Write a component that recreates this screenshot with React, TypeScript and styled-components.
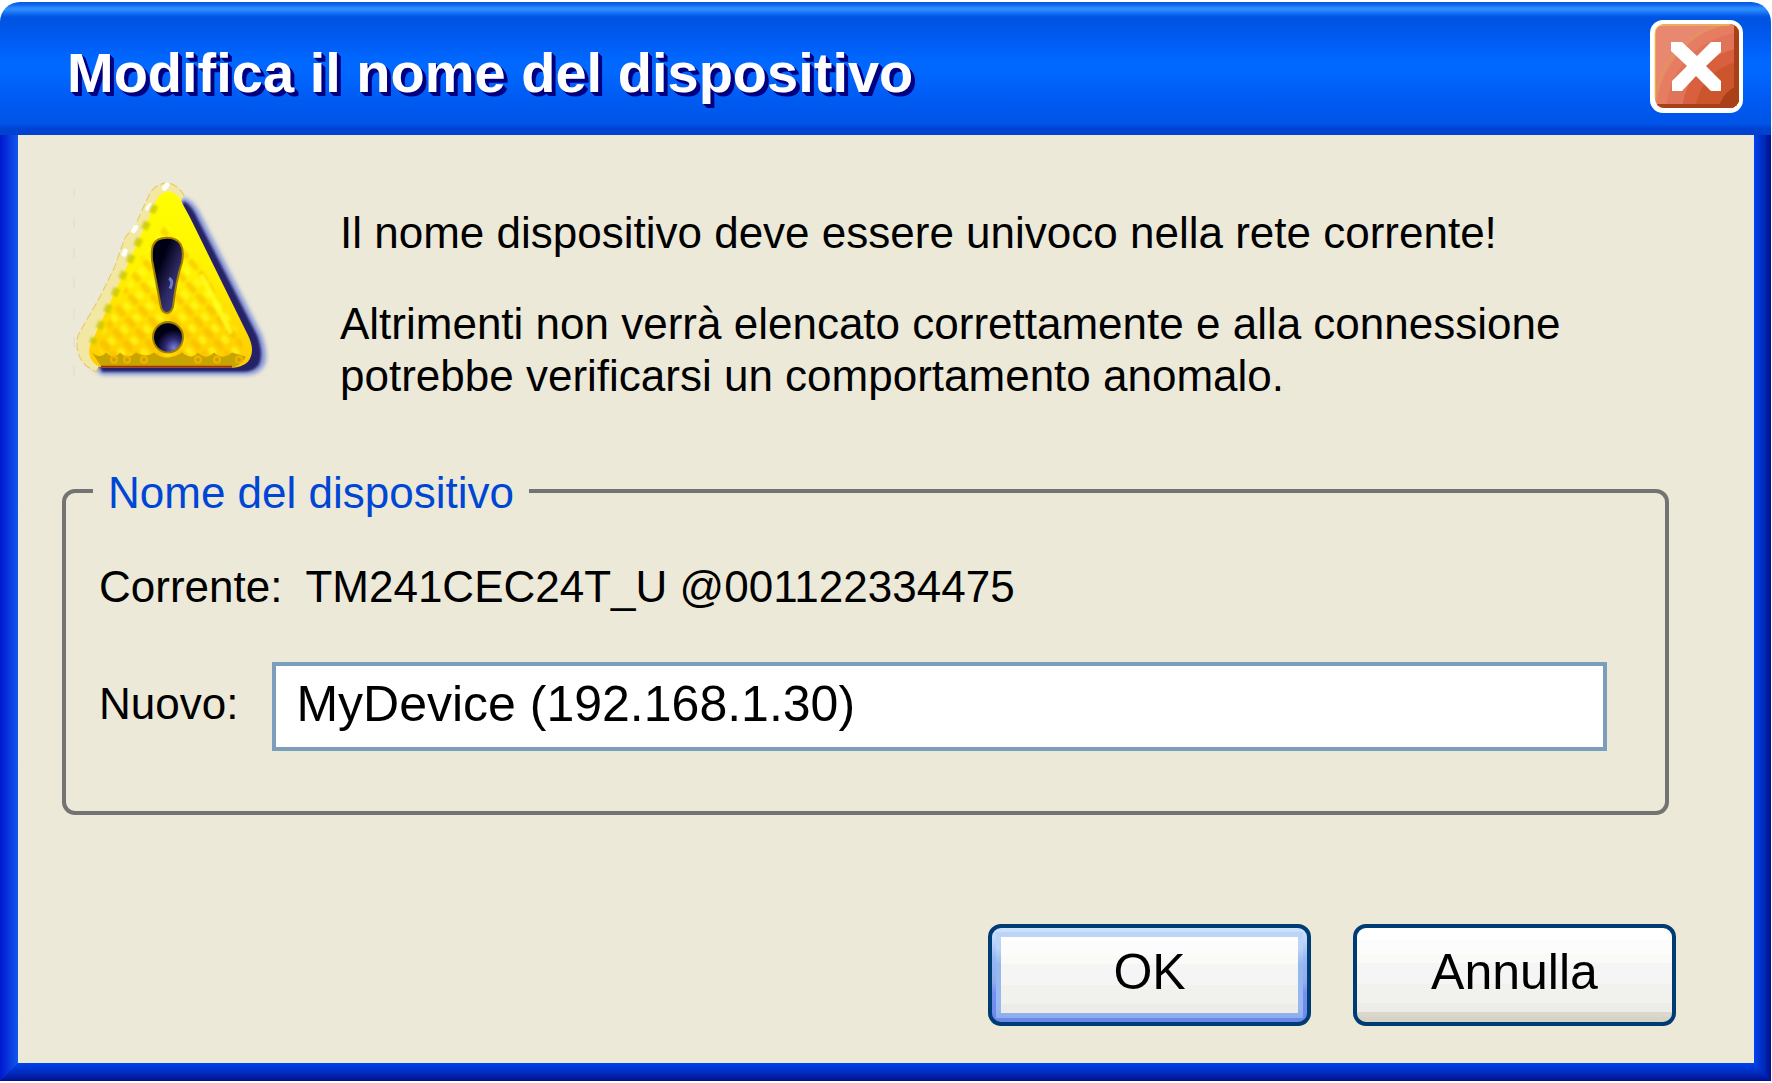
import React, { useState } from "react";
import styled, { createGlobalStyle, css } from "styled-components";

const GlobalStyle = createGlobalStyle`
  *, *::before, *::after { box-sizing: border-box; }
  body {
    margin: 0;
    background: #ffffff;
    color: #000000;
    font-family: "Liberation Sans", Arial, sans-serif;
    font-size: 44px;
    line-height: 52px;
  }
`;

const Window = styled.main`
  margin: 2px 1px 2px 0;
`;

const TitleBar = styled.header`
  display: flex;
  align-items: center;
  justify-content: space-between;
  height: 133px;
  padding: 0 28px 4px 67px;
  border-radius: 20px 20px 0 0;
  background: linear-gradient(
    to bottom,
    #0054e0 0,
    #1468ee 3px,
    #2a8cff 6px,
    #2a8cff 8px,
    #1068f0 12px,
    #0054e4 15px,
    #0054e4 20px,
    #005cf4 40px,
    #0068ff 58px,
    #0068ff 70px,
    #005cf4 94px,
    #0054e8 122px,
    #0044d4 126px,
    #0040cc 133px
  );
`;

const Title = styled.h1`
  margin: 0;
  padding-top: 12px;
  color: #ffffff;
  font-size: 56px;
  font-weight: 700;
  line-height: 64px;
  text-shadow: 1px 1px 0 #000080, 2px 2px 0 #000080, 3px 3px 0 #000080, 4px 4px 0 #000080;
`;

const CloseButton = styled.button`
  display: block;
  padding: 0;
  border: 0;
  background: none;
  svg { display: block; }
`;

const Frame = styled.div`
  position: relative;
  border-style: solid;
  border-width: 0 17px 18px 18px;
  border-color: transparent;
  background:
    linear-gradient(#ece9d8, #ece9d8) padding-box,
    linear-gradient(to bottom, #0044ee, #0028b8 60%, #001090) bottom / 100% 18px no-repeat border-box;

  &::before,
  &::after {
    content: "";
    position: absolute;
    top: 0;
    bottom: -18px;
  }
  &::before {
    left: -18px;
    width: 18px;
    background: linear-gradient(to right, #0018d0, #1058ec);
    clip-path: polygon(0 0, 100% 0, 100% calc(100% - 18px), 0 100%);
  }
  &::after {
    right: -17px;
    width: 17px;
    background: linear-gradient(to right, #0044ee, #0028b8 60%, #001090);
    clip-path: polygon(0 0, 100% 0, 100% 100%, 0 calc(100% - 18px));
  }
`;

const Content = styled.form`
  display: flex;
  flex-direction: column;
  padding: 46px 78px 37px 44px;
`;

const Notice = styled.section`
  display: flex;
  align-items: flex-start;
  gap: 69px;
  padding-left: 8px;
  svg { flex: none; display: block; }
`;

const Message = styled.div`
  padding-top: 26px;
`;

const Paragraph = styled.p`
  margin: 0 0 39px;
  &:last-child { margin-bottom: 0; }
`;

const Group = styled.fieldset`
  min-width: 0;
  margin: 61px 7px 0 0;
  padding: 0 58px 60px 27px;
  border: 4px solid #737373;
  border-radius: 13px;
`;

const Legend = styled.legend`
  padding: 4px 15px 0;
  color: #0046d5;
`;

const Field = styled.div<{ $gap: number }>`
  display: flex;
  align-items: center;
  gap: ${(p) => p.$gap}px;
  padding-left: 6px;
  & + & { margin-top: 49px; }
  &:first-of-type { margin-top: 42px; }
`;

const FieldLabel = styled.label`
  padding-bottom: 6px;
`;

const NameInput = styled.input`
  flex: 1;
  min-width: 0;
  height: 89px;
  padding: 0 20px 6px;
  border: 4px solid #7b9ebd;
  border-radius: 0;
  outline: none;
  background: #ffffff;
  color: #000000;
  font-family: inherit;
  font-size: 50px;
`;

const Actions = styled.footer`
  display: flex;
  justify-content: flex-end;
  gap: 42px;
  margin-top: 109px;
`;

const Button = styled.button<{ $primary?: boolean }>`
  width: 323px;
  height: 102px;
  padding: 0 0 6px;
  border: 4px solid #003c74;
  border-radius: 13px;
  color: #000000;
  font-family: inherit;
  font-size: 50px;
  background: linear-gradient(
    to bottom,
    #ffffff 0 12px,
    #fcfcfc 12px 26px,
    #fafaf6 26px 35px,
    #f5f5f5 35px 56px,
    #f1f1ee 56px 75px,
    #eeece8 75px 84px,
    #dad8cc 84px 89px,
    #d6d3c4 89px
  );
  ${(p) =>
    p.$primary &&
    css`
      background:
        linear-gradient(to bottom, #ffffff 0 4px, #fcfcfc 4px 18px, #fafaf6 18px 27px, #f5f5f5 27px 48px, #f1f1ee 48px 67px, #eeece8 67px)
          center / calc(100% - 18px) calc(100% - 18px) no-repeat,
        linear-gradient(to bottom, #bcd4f6 0, #bcd4f6 16px, #98b8f0 32px, #98b8f0 76px, #8aaee8 100%)
          center / calc(100% - 8px) calc(100% - 8px) no-repeat,
        linear-gradient(to bottom, #cce4ff 0, #bcd4fb 14px, #98b8f4 30px, #90acec 54px, #7890f0 64px, #6c86ee 100%);
    `}
`;

const CloseIcon = () => (
  <svg width="93" height="93" viewBox="0 0 93 93" aria-hidden="true">
    <defs>
      <clipPath id="close-face">
        <rect x="5" y="4" width="84" height="84" rx="9" />
      </clipPath>
    </defs>
    <rect width="93" height="93" rx="13" fill="#ffffff" />
    <g clipPath="url(#close-face)">
      <rect x="4" y="4" width="86" height="86" fill="#e88870" />
      <circle cx="98" cy="94" r="92" fill="#e67c62" />
      <circle cx="98" cy="94" r="82" fill="#e07458" />
      <circle cx="98" cy="94" r="66" fill="#d8603e" />
      <circle cx="98" cy="94" r="53" fill="#cc552c" />
      <circle cx="98" cy="94" r="30" fill="#a84018" />
      <path d="M84 4h6v86H4v-6h80z" fill="#a84018" />
      <path d="M5 80C10 40 40 8 80 4" fill="none" stroke="#d0b020" strokeWidth="1" strokeDasharray="2 1" />
    </g>
    <path d="M5 78V14Q5 5 14 5H80" fill="none" stroke="#f0d050" strokeWidth="1" />
    <path d="M21 22h11l15 14 14-14h10v10L56 46l15 15v10H61L46 56 32 71H22V61l15-15-16-15z" fill="#ffffff" />
  </svg>
);

const WarningIcon = () => (
  <svg width="201" height="200" viewBox="0 -2 201 197" preserveAspectRatio="none" role="img" aria-label="Attenzione">
    <defs>
      <linearGradient id="warn-face" x1="0" y1="0" x2="0" y2="1">
        <stop offset="0" stopColor="#ffff00" />
        <stop offset="0.45" stopColor="#fff200" />
        <stop offset="0.8" stopColor="#ffd800" />
        <stop offset="1" stopColor="#ffcc00" />
      </linearGradient>
      <linearGradient id="warn-mark" x1="0" y1="0" x2="1" y2="1">
        <stop offset="0.3" stopColor="#000014" />
        <stop offset="0.6" stopColor="#2c2860" />
        <stop offset="1" stopColor="#4848a0" />
      </linearGradient>
      <radialGradient id="warn-dot" cx="0.7" cy="0.85" r="0.6">
        <stop offset="0" stopColor="#7880d8" />
        <stop offset="0.5" stopColor="#2c2870" />
        <stop offset="1" stopColor="#000014" />
      </radialGradient>
      <pattern id="warn-weave" width="17" height="15" patternUnits="userSpaceOnUse" patternTransform="rotate(-42)">
        <rect x="1" y="1" width="6" height="13" rx="3" fill="#f8b400" opacity="0.5" />
        <rect x="9" y="4" width="6" height="9" rx="3" fill="#ffff20" opacity="0.6" />
      </pattern>
      <filter id="warn-soft" x="-10%" y="-10%" width="120%" height="120%">
        <feGaussianBlur stdDeviation="2" />
      </filter>
      <filter id="warn-edge" x="-10%" y="-10%" width="120%" height="120%">
        <feGaussianBlur stdDeviation="1" />
      </filter>
      <filter id="warn-blend" x="-10%" y="-10%" width="120%" height="120%">
        <feGaussianBlur stdDeviation="1.2" />
      </filter>
    </defs>
    <path d="M4 6v8M4 34v10M4 64v10M4 94v10M4 124v10M4 152v10M4 180v10" stroke="#dedbca" strokeWidth="1" />
    <path d="M112 14Q124 16 132 34L191 148Q198 166 195 178Q190 189 176 189H32L18 178Z" fill="#8494d8" filter="url(#warn-soft)" />
    <path d="M114 18Q122 22 128 36L187 150Q194 168 189 179Q184 186 172 186H32L28 176Z" fill="#282468" filter="url(#warn-edge)" />
    <path d="M98 0Q84 0 78 14L66 40L55 54L44 84L30 112L8 150Q4 168 16 180L26 186L60 120L114 12Q108 2 98 0Z" fill="#f2e8a4" stroke="#e6c860" strokeWidth="1" strokeDasharray="8 3" />
    <path d="M97 2L74 30L61 51L54 70" fill="none" stroke="#ffffff" strokeWidth="5" strokeDasharray="4 22" strokeLinecap="round" />
    <path d="M88 14Q98 2 109 14L120 34L178 150Q186 166 178 176Q172 182 160 182H32Q16 176 20 160L56 84Z" fill="url(#warn-face)" />
    <path d="M96 40L124 70L170 150Q176 164 168 170H34Q24 164 32 148L70 76Z" fill="url(#warn-weave)" filter="url(#warn-blend)" />
    <path d="M85 22L22 158" stroke="#c8c400" strokeWidth="7" strokeDasharray="8 10" opacity="0.75" filter="url(#warn-edge)" />
    <path d="M132 92L160 146" stroke="#ffff20" strokeWidth="5" strokeLinecap="round" opacity="0.8" filter="url(#warn-edge)" />
    <path d="M22 167q8 7 14 0q8 8 14 0q8 8 16 0q10 6 18 0q12 10 28 0q10 8 16 0q8 8 16 0q8 8 18 0l14 4q-6 10-16 11H32z" fill="#c8a400" />
    <path d="M31 181H162" stroke="#983020" strokeWidth="2" />
    <g fill="none" stroke="#f0b400" strokeWidth="2">
      <circle cx="44" cy="174" r="3" /><circle cx="57" cy="174" r="3" /><circle cx="74" cy="174" r="3" />
      <circle cx="128" cy="174" r="3" /><circle cx="147" cy="174" r="3" /><circle cx="169" cy="174" r="3" />
    </g>
    <path d="M97 54C82 54 81 64 82 76Q86 96 91 123Q93 128 97 128Q101 128 103 122Q106 96 112 78C115 62 110 54 97 54Z" fill="url(#warn-mark)" stroke="#a08000" strokeWidth="2" />
    <path d="M99 94q5 2 1 10" stroke="#7078cc" strokeWidth="3" fill="none" />
    <circle cx="98" cy="152" r="15" fill="url(#warn-dot)" stroke="#a08000" strokeWidth="2" />
  </svg>
);

export default function App() {
  const [name, setName] = useState("MyDevice (192.168.1.30)");
  return (
    <>
      <GlobalStyle />
      <Window>
        <TitleBar>
          <Title>Modifica il nome del dispositivo</Title>
          <CloseButton type="button" aria-label="Chiudi"><CloseIcon /></CloseButton>
        </TitleBar>
        <Frame>
          <Content onSubmit={(e: React.FormEvent) => e.preventDefault()}>
            <Notice>
              <WarningIcon />
              <Message>
                <Paragraph>Il nome dispositivo deve essere univoco nella rete corrente!</Paragraph>
                <Paragraph>
                  Altrimenti non verrà elencato correttamente e alla connessione
                  <br />
                  potrebbe verificarsi un comportamento anomalo.
                </Paragraph>
              </Message>
            </Notice>
            <Group>
              <Legend>Nome del dispositivo</Legend>
              <Field $gap={23}>
                <span>Corrente:</span>
                <span>TM241CEC24T_U @001122334475</span>
              </Field>
              <Field $gap={34}>
                <FieldLabel htmlFor="device-name">Nuovo:</FieldLabel>
                <NameInput id="device-name" type="text" value={name} onChange={(e) => setName(e.target.value)} />
              </Field>
            </Group>
            <Actions>
              <Button type="submit" $primary>OK</Button>
              <Button type="button">Annulla</Button>
            </Actions>
          </Content>
        </Frame>
      </Window>
    </>
  );
}
